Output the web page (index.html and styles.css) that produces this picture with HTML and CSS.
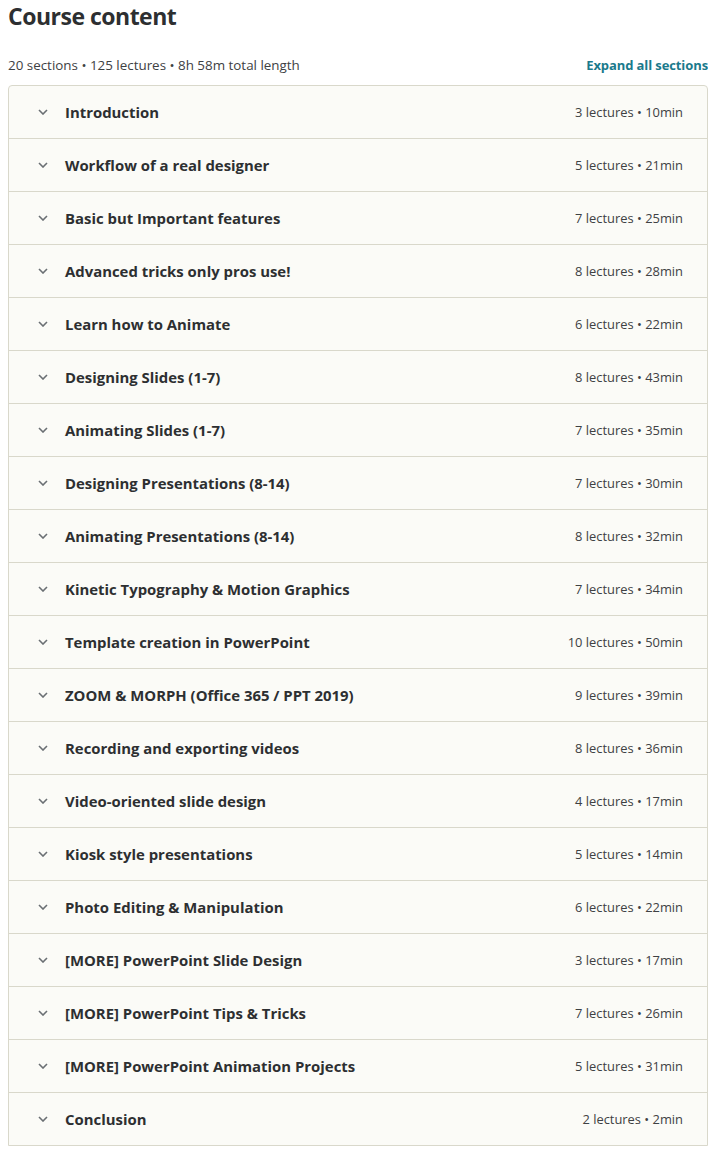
FILE: index.html
```html
<!DOCTYPE html>
<html>
<head>
<meta charset="utf-8">
<link rel="stylesheet" href="styles.css">
</head>
<body>
<div class="page">
  <h2 class="title">Course content</h2>
  <div class="summary">
    <span class="stats">20 sections • 125 lectures • 8h 58m total length</span>
    <a class="expand">Expand all sections</a>
  </div>
  <div class="sections">
    <div class="row"><span class="chev"><svg width="10" height="6" viewBox="0 0 10 6"><path d="M1 1l4 4 4-4" fill="none" stroke="#6a6f73" stroke-width="1.6"/></svg></span><span class="name">Introduction</span><span class="meta">3 lectures • 10min</span></div>
    <div class="row"><span class="chev"><svg width="10" height="6" viewBox="0 0 10 6"><path d="M1 1l4 4 4-4" fill="none" stroke="#6a6f73" stroke-width="1.6"/></svg></span><span class="name">Workflow of a real designer</span><span class="meta">5 lectures • 21min</span></div>
    <div class="row"><span class="chev"><svg width="10" height="6" viewBox="0 0 10 6"><path d="M1 1l4 4 4-4" fill="none" stroke="#6a6f73" stroke-width="1.6"/></svg></span><span class="name">Basic but Important features</span><span class="meta">7 lectures • 25min</span></div>
    <div class="row"><span class="chev"><svg width="10" height="6" viewBox="0 0 10 6"><path d="M1 1l4 4 4-4" fill="none" stroke="#6a6f73" stroke-width="1.6"/></svg></span><span class="name">Advanced tricks only pros use!</span><span class="meta">8 lectures • 28min</span></div>
    <div class="row"><span class="chev"><svg width="10" height="6" viewBox="0 0 10 6"><path d="M1 1l4 4 4-4" fill="none" stroke="#6a6f73" stroke-width="1.6"/></svg></span><span class="name">Learn how to Animate</span><span class="meta">6 lectures • 22min</span></div>
    <div class="row"><span class="chev"><svg width="10" height="6" viewBox="0 0 10 6"><path d="M1 1l4 4 4-4" fill="none" stroke="#6a6f73" stroke-width="1.6"/></svg></span><span class="name">Designing Slides (1-7)</span><span class="meta">8 lectures • 43min</span></div>
    <div class="row"><span class="chev"><svg width="10" height="6" viewBox="0 0 10 6"><path d="M1 1l4 4 4-4" fill="none" stroke="#6a6f73" stroke-width="1.6"/></svg></span><span class="name">Animating Slides (1-7)</span><span class="meta">7 lectures • 35min</span></div>
    <div class="row"><span class="chev"><svg width="10" height="6" viewBox="0 0 10 6"><path d="M1 1l4 4 4-4" fill="none" stroke="#6a6f73" stroke-width="1.6"/></svg></span><span class="name">Designing Presentations (8-14)</span><span class="meta">7 lectures • 30min</span></div>
    <div class="row"><span class="chev"><svg width="10" height="6" viewBox="0 0 10 6"><path d="M1 1l4 4 4-4" fill="none" stroke="#6a6f73" stroke-width="1.6"/></svg></span><span class="name">Animating Presentations (8-14)</span><span class="meta">8 lectures • 32min</span></div>
    <div class="row"><span class="chev"><svg width="10" height="6" viewBox="0 0 10 6"><path d="M1 1l4 4 4-4" fill="none" stroke="#6a6f73" stroke-width="1.6"/></svg></span><span class="name">Kinetic Typography &amp; Motion Graphics</span><span class="meta">7 lectures • 34min</span></div>
    <div class="row"><span class="chev"><svg width="10" height="6" viewBox="0 0 10 6"><path d="M1 1l4 4 4-4" fill="none" stroke="#6a6f73" stroke-width="1.6"/></svg></span><span class="name">Template creation in PowerPoint</span><span class="meta">10 lectures • 50min</span></div>
    <div class="row"><span class="chev"><svg width="10" height="6" viewBox="0 0 10 6"><path d="M1 1l4 4 4-4" fill="none" stroke="#6a6f73" stroke-width="1.6"/></svg></span><span class="name">ZOOM &amp; MORPH (Office 365 / PPT 2019)</span><span class="meta">9 lectures • 39min</span></div>
    <div class="row"><span class="chev"><svg width="10" height="6" viewBox="0 0 10 6"><path d="M1 1l4 4 4-4" fill="none" stroke="#6a6f73" stroke-width="1.6"/></svg></span><span class="name">Recording and exporting videos</span><span class="meta">8 lectures • 36min</span></div>
    <div class="row"><span class="chev"><svg width="10" height="6" viewBox="0 0 10 6"><path d="M1 1l4 4 4-4" fill="none" stroke="#6a6f73" stroke-width="1.6"/></svg></span><span class="name">Video-oriented slide design</span><span class="meta">4 lectures • 17min</span></div>
    <div class="row"><span class="chev"><svg width="10" height="6" viewBox="0 0 10 6"><path d="M1 1l4 4 4-4" fill="none" stroke="#6a6f73" stroke-width="1.6"/></svg></span><span class="name">Kiosk style presentations</span><span class="meta">5 lectures • 14min</span></div>
    <div class="row"><span class="chev"><svg width="10" height="6" viewBox="0 0 10 6"><path d="M1 1l4 4 4-4" fill="none" stroke="#6a6f73" stroke-width="1.6"/></svg></span><span class="name">Photo Editing &amp; Manipulation</span><span class="meta">6 lectures • 22min</span></div>
    <div class="row"><span class="chev"><svg width="10" height="6" viewBox="0 0 10 6"><path d="M1 1l4 4 4-4" fill="none" stroke="#6a6f73" stroke-width="1.6"/></svg></span><span class="name">[MORE] PowerPoint Slide Design</span><span class="meta">3 lectures • 17min</span></div>
    <div class="row"><span class="chev"><svg width="10" height="6" viewBox="0 0 10 6"><path d="M1 1l4 4 4-4" fill="none" stroke="#6a6f73" stroke-width="1.6"/></svg></span><span class="name">[MORE] PowerPoint Tips &amp; Tricks</span><span class="meta">7 lectures • 26min</span></div>
    <div class="row"><span class="chev"><svg width="10" height="6" viewBox="0 0 10 6"><path d="M1 1l4 4 4-4" fill="none" stroke="#6a6f73" stroke-width="1.6"/></svg></span><span class="name">[MORE] PowerPoint Animation Projects</span><span class="meta">5 lectures • 31min</span></div>
    <div class="row"><span class="chev"><svg width="10" height="6" viewBox="0 0 10 6"><path d="M1 1l4 4 4-4" fill="none" stroke="#6a6f73" stroke-width="1.6"/></svg></span><span class="name">Conclusion</span><span class="meta">2 lectures • 2min</span></div>
  </div>
</div>
</body>
</html>
```
FILE: styles.css
```css
* { box-sizing: border-box; }
body {
  margin: 8px;
  font-family: "Open Sans", "Noto Sans", sans-serif;
  color: #2d2f31;
  background: #fff;
}
.title {
  margin: 0;
  height: 36px;
  font-size: 23px;
  font-weight: 700;
  line-height: 16px;
  letter-spacing: -0.5px;
  color: #2d2f31;
}
.summary {
  display: flex;
  justify-content: space-between;
  align-items: center;
  height: 41px;
  font-size: 13.4px;
}
.stats { color: #3e4143; }
.expand {
  color: #1a7a8c;
  font-weight: 700;
  font-size: 13px;
  letter-spacing: -0.1px;
}
.sections {
  border: 1px solid #d9d8cb;
  border-radius: 4px 4px 0 0;
  background: #fbfbf7;
}
.row {
  display: flex;
  align-items: center;
  height: 53px;
  padding: 0 24px 0 28px;
  border-bottom: 1px solid #d9d8cb;
}
.row:last-child { border-bottom: none; height: 52px; }
.chev {
  width: 28px;
  display: flex;
  align-items: center;
  padding-left: 1px;
}
.chev svg { display: block; }
.name {
  flex: 1;
  font-size: 14.9px;
  font-weight: 700;
  color: #2d2f31;
}
.meta {
  font-size: 12.9px;
  color: #3e4143;
}
```
